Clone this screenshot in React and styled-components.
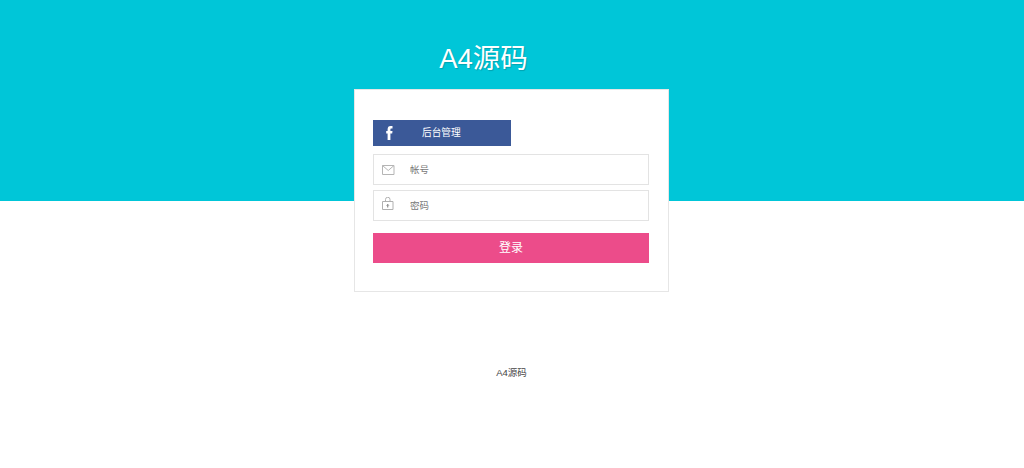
import styled, { createGlobalStyle } from "styled-components";

const Global = createGlobalStyle`
  html, body {
    margin: 0;
    padding: 0;
    background: #fff;
    font-family: "Liberation Sans", "Noto Sans CJK SC", sans-serif;
  }
  * {
    box-sizing: border-box;
  }
`;

const Hero = styled.header`
  height: 201px;
  background: #00c6d8;
  display: flex;
  justify-content: center;
  padding: 41px 57px 0 0;
`;

const Title = styled.h1`
  margin: 0;
  font-size: 27.5px;
  line-height: 36px;
  font-weight: 400;
  color: #fff;
  text-shadow: 1px 1px 1px rgba(0, 0, 0, 0.18);
`;

const Content = styled.main`
  padding-right: 1px;
`;

const Card = styled.section`
  width: 315px;
  height: 203px;
  margin: -112px auto 0;
  padding: 30px 19px 0 18px;
  background: #fff;
  border: 1px solid #e6e6e6;
  display: flex;
  flex-direction: column;
`;

const FacebookBar = styled.div`
  width: 138px;
  height: 26px;
  padding: 0 0 3px 13px;
  margin-bottom: 8px;
  background: #3b5998;
  color: #fff;
  font-size: 9.7px;
  display: flex;
  align-items: center;

  svg {
    width: 7px;
    height: 14px;
    margin: 3px 29px 0 0;
  }
`;

const Field = styled.label`
  height: 31px;
  border: 1px solid #e3e3e3;
  display: flex;
  align-items: center;
  padding-left: 8px;
  margin-bottom: ${(p) => p.$gap}px;

  svg {
    width: 13px;
    height: 13px;
    flex: none;
    margin-right: 15px;
    margin-top: ${(p) => p.$iconShift}px;
  }
`;

const Input = styled.input`
  flex: 1;
  min-width: 0;
  border: none;
  outline: none;
  padding: 0;
  font-size: 9.5px;
  font-family: inherit;
  color: #555;

  &::placeholder {
    color: #777;
    opacity: 1;
  }
`;

const Submit = styled.button`
  height: 30px;
  border: none;
  padding: 0 0 3px;
  background: #ec4c8a;
  color: #fff;
  font-size: 12px;
  font-family: inherit;
`;

const Footer = styled.footer`
  margin-top: 74px;
  text-align: center;
  font-size: 9.5px;
  line-height: 14px;
  color: #444;
`;

const FacebookIcon = () => (
  <svg viewBox="0 0 7 14" fill="#fff">
    <path d="M1.6 14V7.4H.2V5h1.4V3.4C1.6 1.1 2.6 0 4.6 0h1.9v2.4H5.4c-.8 0-1 .4-1 1.1V5h2.1l-.3 2.4H4.4V14z" />
  </svg>
);

const MailIcon = () => (
  <svg viewBox="0 0 13 13" fill="none" stroke="#b5b5b5" strokeWidth="1">
    <path d="M.5 2.5h11.5v9H.5z" />
    <path d="M.5 2.5l5.75 5 5.75-5" />
  </svg>
);

const LockIcon = () => (
  <svg viewBox="0 0 13 13" fill="none" stroke="#b0b0b0" strokeWidth="1">
    <path d="M.5 4.5h10.5v8H.5z" />
    <path d="M3.5 4.5V2.5a2.25 2.25 0 0 1 4.5 0v2" />
    <path d="M5.75 10.5V7.5M4.75 8.5l1-1 1 1" stroke="#777" />
  </svg>
);

const App = () => {
  return (
    <>
      <Global />
      <Hero>
        <Title>A4源码</Title>
      </Hero>
      <Content>
        <Card>
          <FacebookBar>
            <FacebookIcon />
            后台管理
          </FacebookBar>
          <Field $gap={5}>
            <MailIcon />
            <Input type="text" placeholder="帐号" />
          </Field>
          <Field $gap={12} $iconShift={-4}>
            <LockIcon />
            <Input type="password" placeholder="密码" />
          </Field>
          <Submit>登录</Submit>
        </Card>
        <Footer>A4源码</Footer>
      </Content>
    </>
  );
};

export default App;
